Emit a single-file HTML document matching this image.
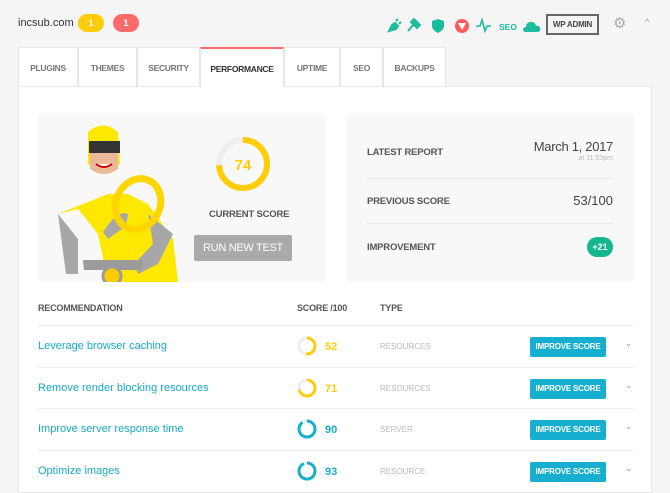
<!DOCTYPE html>
<html><head><meta charset="utf-8"><style>
*{box-sizing:border-box;margin:0;padding:0}
body{width:670px;height:493px;overflow:hidden;background:#f5f5f5;font-family:"Liberation Sans",sans-serif;position:relative}
.abs{position:absolute}
.b{font-weight:bold}
.tab{position:absolute;top:47px;height:39px;background:#fff;border:1px solid #e6e6e6;border-bottom:none;font-size:8.5px;letter-spacing:-0.3px;font-weight:bold;color:#777;text-align:center;line-height:40px}
.lbl{font-size:9.5px;letter-spacing:-0.2px;font-weight:bold;color:#555}
.row{position:absolute;left:38px;width:595px;height:42px;border-top:1px solid #ececec}
.row .n{position:absolute;left:0;top:14px;font-size:11px;color:#17a8c9}
.row svg{position:absolute;left:259px;top:10px}
.row .s{position:absolute;left:287px;top:15px;font-size:11px;font-weight:bold}
.row .t{position:absolute;left:342px;top:16px;font-size:8px;color:#bbb}
.row .btn{position:absolute;left:492px;top:11px;width:76px;height:20px;background:#17afcf;color:#fff;font-size:8px;letter-spacing:-0.2px;font-weight:bold;text-align:center;line-height:20px;border-radius:2px}
.row .c{position:absolute;left:587px;top:12px;font-size:9px;color:#999}
</style></head><body>
<div class="abs" style="left:18px;top:17px;font-size:11px;color:#333">incsub.com</div>
<div class="abs b" style="left:78px;top:14px;width:26px;height:18px;border-radius:9px;background:#fecc09;color:#fff;font-size:9px;text-align:center;line-height:18px">1</div>
<div class="abs b" style="left:113px;top:14px;width:26px;height:18px;border-radius:9px;background:#ff6b6b;color:#fff;font-size:9px;text-align:center;line-height:18px">1</div>
<svg class="abs" style="left:386px;top:15px" width="160" height="20">
<g fill="#1abc9c">
<path d="M3 16 L6 10 L9 8 L12 11 L10 14 Z M10 6 L12 4 M13 9 L15 7" stroke="#1abc9c" stroke-width="2"/>
<path d="M22 16 L27 10 M25 7 L31 13 L34 10 L28 4 Z" stroke="#1abc9c" stroke-width="2"/>
<path d="M52 4 L58 6 L58 11 Q58 15 52 18 Q46 15 46 11 L46 6 Z"/>
</g>
<circle cx="76" cy="11" r="7" fill="#ff5b5b"/><path d="M72 8 L80 8 L76 15 Z" fill="#fff"/>
<path d="M90 11 L94 11 L96 5 L99 16 L101 11 L105 11" stroke="#1abc9c" stroke-width="1.6" fill="none"/>
<text x="113" y="15" font-family="Liberation Sans" font-size="8.5" font-weight="bold" fill="#1abc9c">SEO</text>
<path d="M139 17 L151 17 Q155 17 154 13 Q153 10 150 11 Q149 6 144 7 Q140 8 140 12 Q137 12 137 15 Q138 17 139 17 Z" fill="#1abc9c"/>
</svg>
<div class="abs b" style="left:546px;top:14px;width:53px;height:21px;border:2px solid #666;font-size:8px;letter-spacing:-0.2px;color:#444;text-align:center;line-height:17px">WP ADMIN</div>
<div class="abs" style="left:613px;top:14px;font-size:15px;color:#aaa">⚙</div>
<div class="abs" style="left:645px;top:17px;font-size:9px;color:#999">^</div>

<div class="abs" style="left:18px;top:86px;width:634px;height:407px;background:#fff;border:1px solid #e8e8e8"></div>
<div class="tab" style="left:18px;width:60px">PLUGINS</div>
<div class="tab" style="left:78px;width:59px">THEMES</div>
<div class="tab" style="left:137px;width:63px">SECURITY</div>
<div class="tab" style="left:200px;width:84px;color:#333;height:40px;border-top:2px solid #ff6b6b">PERFORMANCE</div>
<div class="tab" style="left:284px;width:56px">UPTIME</div>
<div class="tab" style="left:340px;width:43px">SEO</div>
<div class="tab" style="left:383px;width:63px">BACKUPS</div>

<div class="abs" style="left:38px;top:114px;width:288px;height:168px;background:#f8f8f8;border-radius:4px;overflow:hidden">
<svg width="288" height="168">
<path d="M20 100 L40 95 L60 120 L70 168 L140 168 L135 125 L110 90 L90 80 L70 80 L50 88 Z" fill="#ffe800"/>
<path d="M20 100 L28 160 L40 160 L40 125 Z" fill="#a7a7a7"/>
<path d="M110 100 L135 120 L120 150 L100 160 L96 150 L115 130 Z" fill="#a7a7a7"/>
<path d="M65 118 Q80 95 90 100 L88 112 L70 125 Z" fill="#a7a7a7"/>
<ellipse cx="100" cy="90" rx="22" ry="26" transform="rotate(25 100 90)" fill="none" stroke="#ffd500" stroke-width="7"/>
<path d="M50 18 Q65 5 80 18 L82 50 Q66 62 50 50 Z" fill="#ffe800"/>
<path d="M52 35 Q66 42 80 35 L80 55 Q66 65 52 55 Z" fill="#e9b99a"/>
<rect x="51" y="27" width="31" height="12" fill="#333"/>
<path d="M58 50 Q66 56 74 50" stroke="#c00" stroke-width="2" fill="#fff"/>
<path d="M45 146 L105 146 L104 156 L46 156 Z" fill="#9b9b9b"/>
<circle cx="74" cy="162" r="9" fill="#ffcc00" stroke="#9b9b9b" stroke-width="3"/>
</svg>
</div>
<svg class="abs" style="left:214px;top:135px" width="58" height="58">
<circle cx="29" cy="29" r="24" fill="none" stroke="#eee" stroke-width="6"/>
<circle cx="29" cy="29" r="24" fill="none" stroke="#fecc09" stroke-width="6" stroke-dasharray="111.6 150.8" transform="rotate(-90 29 29)"/>
<text x="29" y="35" text-anchor="middle" font-family="Liberation Sans" font-size="15" font-weight="bold" fill="#fecc09">74</text>
</svg>
<div class="abs lbl" style="left:209px;top:209px">CURRENT SCORE</div>
<div class="abs" style="left:194px;top:235px;width:98px;height:26px;background:#aaa;border-radius:2px;color:#fff;font-size:11px;letter-spacing:-0.3px;text-align:center;line-height:26px">RUN NEW TEST</div>

<div class="abs" style="left:346px;top:114px;width:288px;height:168px;background:#f8f8f8;border-radius:4px"></div>
<div class="abs lbl" style="left:367px;top:147px">LATEST REPORT</div>
<div class="abs" style="left:480px;top:139px;width:133px;text-align:right;font-size:13px;letter-spacing:-0.3px;color:#444">March 1, 2017</div>
<div class="abs" style="left:480px;top:155px;width:133px;text-align:right;font-size:7px;color:#bbb">at 11:53pm</div>
<div class="abs" style="left:367px;top:178px;width:246px;border-top:1px solid #eaeaea"></div>
<div class="abs lbl" style="left:367px;top:196px">PREVIOUS SCORE</div>
<div class="abs" style="left:480px;top:193px;width:133px;text-align:right;font-size:13px;color:#444">53/100</div>
<div class="abs" style="left:367px;top:223px;width:246px;border-top:1px solid #eaeaea"></div>
<div class="abs lbl" style="left:367px;top:242px">IMPROVEMENT</div>
<div class="abs b" style="left:587px;top:237px;width:26px;height:20px;border-radius:10px;background:#14b78f;color:#fff;font-size:9px;text-align:center;line-height:20px">+21</div>

<div class="abs lbl" style="left:38px;top:303px;font-size:9px">RECOMMENDATION</div>
<div class="abs lbl" style="left:297px;top:303px;font-size:9px">SCORE /100</div>
<div class="abs lbl" style="left:380px;top:303px;font-size:9px">TYPE</div>

<div class="row" style="top:325px"><span class="n">Leverage browser caching</span>
<svg width="20" height="20"><circle cx="10" cy="10" r="8" fill="none" stroke="#eee" stroke-width="3"/><circle cx="10" cy="10" r="8" fill="none" stroke="#fecc09" stroke-width="3" stroke-dasharray="26.1 50.3" transform="rotate(-90 10 10)"/></svg>
<span class="s" style="color:#fecc09">52</span><span class="t">RESOURCES</span><span class="btn">IMPROVE SCORE</span><span class="c">⌄</span></div>
<div class="row" style="top:367px"><span class="n">Remove render blocking resources</span>
<svg width="20" height="20"><circle cx="10" cy="10" r="8" fill="none" stroke="#eee" stroke-width="3"/><circle cx="10" cy="10" r="8" fill="none" stroke="#fecc09" stroke-width="3" stroke-dasharray="35.7 50.3" transform="rotate(-90 10 10)"/></svg>
<span class="s" style="color:#fecc09">71</span><span class="t">RESOURCES</span><span class="btn">IMPROVE SCORE</span><span class="c">⌄</span></div>
<div class="row" style="top:408px"><span class="n">Improve server response time</span>
<svg width="20" height="20"><circle cx="10" cy="10" r="8" fill="none" stroke="#eee" stroke-width="3"/><circle cx="10" cy="10" r="8" fill="none" stroke="#17afcf" stroke-width="3" stroke-dasharray="45.2 50.3" transform="rotate(-90 10 10)"/></svg>
<span class="s" style="color:#17afcf">90</span><span class="t">SERVER</span><span class="btn">IMPROVE SCORE</span><span class="c">⌄</span></div>
<div class="row" style="top:450px"><span class="n">Optimize images</span>
<svg width="20" height="20"><circle cx="10" cy="10" r="8" fill="none" stroke="#eee" stroke-width="3"/><circle cx="10" cy="10" r="8" fill="none" stroke="#17afcf" stroke-width="3" stroke-dasharray="46.8 50.3" transform="rotate(-90 10 10)"/></svg>
<span class="s" style="color:#17afcf">93</span><span class="t">RESOURCE</span><span class="btn">IMPROVE SCORE</span><span class="c">⌄</span></div>
</body></html>
